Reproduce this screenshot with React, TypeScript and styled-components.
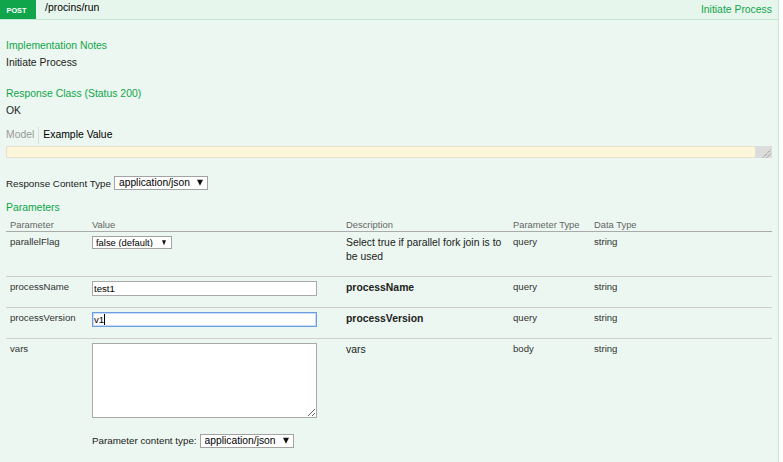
import styled, { createGlobalStyle } from 'styled-components';

const GlobalStyle = createGlobalStyle`
  html, body {
    margin: 0;
    padding: 0;
    background: #fff;
  }
  body {
    font-family: "Liberation Sans", Arial, sans-serif;
    color: #333;
  }
`;

const Operation = styled.div`
  width: 778px;
  border-right: 1px solid #c3e8d1;
`;

const Heading = styled.div`
  display: flex;
  align-items: flex-start;
  height: 19px;
  background: #e7f6ec;
  border-bottom: 1px solid #c3e8d1;
`;

const Method = styled.span`
  width: 33px;
  padding: 1px 3px 0 0;
  height: 18px;
  display: flex;
  align-items: center;
  justify-content: center;
  background: #10a54a;
  color: #fff;
  font-size: 7.3px;
  font-weight: bold;
`;

const Path = styled.span`
  margin-left: 9px;
  padding-top: 2px;
  font-size: 10.4px;
  line-height: 12px;
  color: #000;
`;

const Summary = styled.span`
  margin-left: auto;
  padding: 4px 6px 0 0;
  font-size: 10.4px;
  line-height: 12px;
  color: #10a54a;
`;

const Content = styled.div`
  background: #ebf7f0;
  padding: 20px 6px 20px;
`;

const SectionTitle = styled.h4<{ $gap?: number }>`
  margin: ${(p) => p.$gap ?? 0}px 0 0;
  font-size: 10.4px;
  line-height: 12px;
  font-weight: normal;
  color: #10a54a;
`;

const Text = styled.p`
  margin: 5px 0 0;
  font-size: 10.4px;
  line-height: 12px;
  color: #222;
`;

const Tabs = styled.div`
  display: flex;
  margin-top: 10px;
`;

const Tab = styled.span<{ $active?: boolean }>`
  padding: 2px 4px 3px;
  font-size: 10.4px;
  line-height: 12px;
  color: ${(p) => (p.$active ? '#000' : '#999')};
  &:first-child {
    padding-left: 0;
    border-right: 1px solid #ddd;
  }
`;

const ExampleBox = styled.div`
  display: flex;
  height: 12px;
  margin-top: 2px;
  width: 766px;
`;

const Snippet = styled.div`
  flex: 1;
  background: #fcf6db;
  border: 1px solid #e5e0c6;
  border-right: none;
  border-radius: 2px 0 0 2px;
`;

const Grip = styled.div`
  width: 17px;
  background: #dcdcdc;
  display: flex;
  align-items: flex-end;
  justify-content: flex-end;
`;

const InlineRow = styled.div<{ $gap: number }>`
  display: flex;
  align-items: center;
  gap: 3px;
  margin-top: ${(p) => p.$gap}px;
  font-size: 9.8px;
  color: #222;
`;

const SelectWrap = styled.span<{ $width: number; $height: number; $small?: boolean }>`
  position: relative;
  display: inline-flex;
  width: ${(p) => p.$width}px;
  height: ${(p) => p.$height}px;

  select {
    appearance: none;
    width: 100%;
    height: 100%;
    box-sizing: border-box;
    margin: 0;
    border: 1px solid #a3a3a3;
    border-radius: 0;
    background: #fff;
    padding: 0 0 0 ${(p) => (p.$small ? 3 : 4)}px;
    font-family: "Liberation Sans", Arial, sans-serif;
    font-size: ${(p) => (p.$small ? 9.4 : 10.3)}px;
    line-height: 1;
    color: #000;
    outline: none;
  }

  &::after {
    content: '';
    position: absolute;
    right: ${(p) => (p.$small ? 6 : 5)}px;
    top: 50%;
    transform: translateY(-55%);
    border-left: ${(p) => (p.$small ? 2.5 : 3.5)}px solid transparent;
    border-right: ${(p) => (p.$small ? 2.5 : 3.5)}px solid transparent;
    border-top: ${(p) => (p.$small ? 5 : 6)}px solid #111;
    pointer-events: none;
  }
`;

const ParamTable = styled.table`
  width: 766px;
  margin-top: 1px;
  border-collapse: collapse;
  table-layout: fixed;
`;

const Th = styled.th<{ $w?: number }>`
  box-sizing: border-box;
  width: ${(p) => (p.$w ? `${p.$w}px` : 'auto')};
  padding: 4px 4px 1px;
  text-align: left;
  font-weight: normal;
  font-size: 9.4px;
  line-height: 11px;
  color: #666;
  border-bottom: 1px solid #aaa;
`;

const Row = styled.tr`
  & > td {
    border-bottom: 1px solid #cfcfcf;
  }
  &:last-child > td {
    border-bottom: none;
  }
`;

const Td = styled.td`
  padding: 4px;
  vertical-align: top;
  font-size: 9.6px;
  line-height: 12px;
  color: #333;
`;

const Desc = styled.p<{ $bold?: boolean }>`
  margin: 0 0 8px;
  font-size: 10.4px;
  line-height: 14px;
  font-weight: ${(p) => (p.$bold ? 'bold' : 'normal')};
  color: #222;
`;

const InputWrap = styled.span`
  position: relative;
  display: block;
  width: 225px;
`;

const TextInput = styled.input<{ $focused?: boolean }>`
  display: block;
  width: 225px;
  height: 15px;
  box-sizing: border-box;
  margin: 0;
  padding: 0 1px;
  border: 1px solid ${(p) => (p.$focused ? '#6b9de2' : '#a9a9a9')};
  box-shadow: ${(p) => (p.$focused ? 'inset 0 0 0 1px #c9dcf6' : 'none')};
  border-radius: 0;
  background: #fff;
  font-family: "Liberation Sans", Arial, sans-serif;
  font-size: 9.6px;
  color: #000;
  outline: none;
`;

const Caret = styled.span`
  position: absolute;
  left: 12px;
  top: 2px;
  width: 1px;
  height: 11px;
  background: #000;
`;

const BodyArea = styled.textarea`
  display: block;
  width: 225px;
  height: 75px;
  box-sizing: border-box;
  margin: 0;
  border: 1px solid #a9a9a9;
  border-radius: 0;
  background: #fff;
  outline: none;
`;

type Param = {
  name: string;
  desc: string;
  bold?: boolean;
  kind: string;
  type: string;
};

const params: Param[] = [
  { name: 'parallelFlag', desc: 'Select true if parallel fork join is to be used', kind: 'query', type: 'string' },
  { name: 'processName', desc: 'processName', bold: true, kind: 'query', type: 'string' },
  { name: 'processVersion', desc: 'processVersion', bold: true, kind: 'query', type: 'string' },
  { name: 'vars', desc: 'vars', kind: 'body', type: 'string' },
];

function ValueCell({ name }: { name: string }) {
  if (name === 'parallelFlag') {
    return (
      <SelectWrap $width={80} $height={13} $small>
        <select defaultValue="">
          <option value="">false (default)</option>
          <option value="true">true</option>
          <option value="false">false</option>
        </select>
      </SelectWrap>
    );
  }
  if (name === 'processName') {
    return <TextInput defaultValue="test1" />;
  }
  if (name === 'processVersion') {
    return (
      <InputWrap>
        <TextInput $focused defaultValue="v1" />
        <Caret />
      </InputWrap>
    );
  }
  return (
    <>
      <BodyArea />
      <InlineRow $gap={16}>
        <span>Parameter content type:</span>
        <SelectWrap $width={94} $height={14}>
          <select defaultValue="application/json">
            <option>application/json</option>
          </select>
        </SelectWrap>
      </InlineRow>
    </>
  );
}

export default function App() {
  return (
    <>
      <GlobalStyle />
      <Operation>
        <Heading>
          <Method>POST</Method>
          <Path>/procins/run</Path>
          <Summary>Initiate Process</Summary>
        </Heading>
        <Content>
          <SectionTitle>Implementation Notes</SectionTitle>
          <Text>Initiate Process</Text>

          <SectionTitle $gap={19}>Response Class (Status 200)</SectionTitle>
          <Text>OK</Text>

          <Tabs>
            <Tab>Model</Tab>
            <Tab $active>Example Value</Tab>
          </Tabs>
          <ExampleBox>
            <Snippet />
            <Grip>
              <svg width="12" height="11" viewBox="0 0 12 11">
                <line x1="3" y1="10.5" x2="10.5" y2="3" stroke="#555" strokeWidth="0.9" strokeDasharray="1 1" />
                <line x1="7" y1="10.5" x2="10.5" y2="7" stroke="#555" strokeWidth="0.9" strokeDasharray="1 1" />
              </svg>
            </Grip>
          </ExampleBox>

          <InlineRow $gap={18}>
            <span>Response Content Type</span>
            <SelectWrap $width={94} $height={14}>
              <select defaultValue="application/json">
                <option>application/json</option>
              </select>
            </SelectWrap>
          </InlineRow>

          <SectionTitle $gap={12}>Parameters</SectionTitle>
          <ParamTable>
            <thead>
              <tr>
                <Th $w={82}>Parameter</Th>
                <Th $w={254}>Value</Th>
                <Th $w={167}>Description</Th>
                <Th $w={81}>Parameter Type</Th>
                <Th>Data Type</Th>
              </tr>
            </thead>
            <tbody>
              {params.map((p) => (
                <Row key={p.name}>
                  <Td>{p.name}</Td>
                  <Td>
                    <ValueCell name={p.name} />
                  </Td>
                  <Td>
                    <Desc $bold={p.bold}>{p.desc}</Desc>
                  </Td>
                  <Td>{p.kind}</Td>
                  <Td>{p.type}</Td>
                </Row>
              ))}
            </tbody>
          </ParamTable>
        </Content>
      </Operation>
    </>
  );
}
